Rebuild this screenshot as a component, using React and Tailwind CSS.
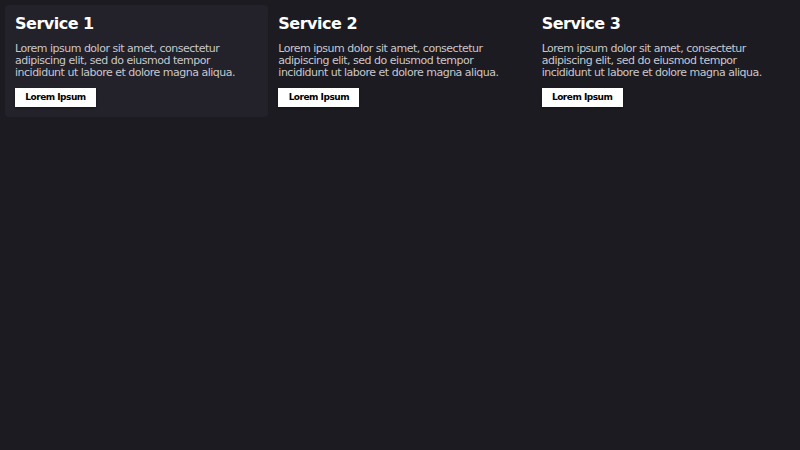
import React from 'react';

const services = [
    { id: 1, title: 'Service 1', active: true },
    { id: 2, title: 'Service 2' },
    { id: 3, title: 'Service 3' },
];

export default function App() {
    return (
        <div
            className="min-h-[450px] w-full bg-[#1c1b21] p-[5px] tracking-[-0.5px]"
            style={{ fontFamily: '"DejaVu Sans", sans-serif' }}
        >
            <div className="grid grid-cols-3">
                {services.map((s) => (
                    <div
                        key={s.id}
                        className={`rounded-sm p-[10px] ${s.active ? 'bg-[#232129]' : ''}`}
                    >
                        <h2 className="text-[16px] leading-[18px] font-bold text-white mb-[10px]">
                            {s.title}
                        </h2>
                        <p className="text-[11px] leading-[12px] text-[#c9c7cc] mb-[4px]">
                            Lorem ipsum dolor sit amet, consectetur adipiscing elit, sed do eiusmod tempor
                            incididunt ut labore et dolore magna aliqua.
                        </p>
                        <button className="h-[19px] w-[81px] bg-white text-black text-[9px] font-bold shadow-[0_1px_2px_rgba(0,0,0,0.4)]">
                            Lorem Ipsum
                        </button>
                    </div>
                ))}
            </div>
        </div>
    );
}
